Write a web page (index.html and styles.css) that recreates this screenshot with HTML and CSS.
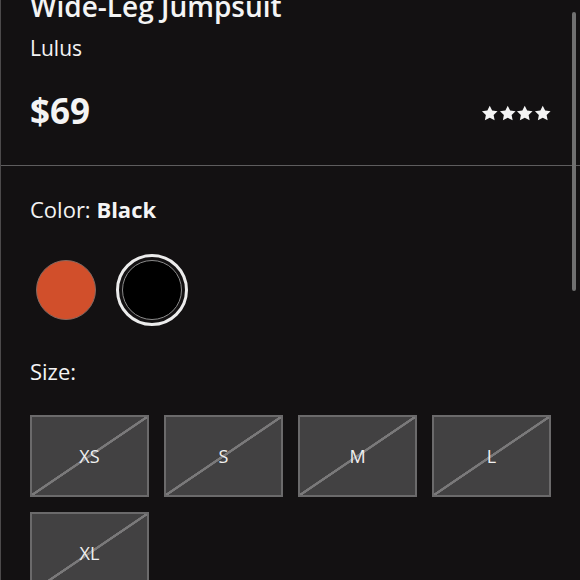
FILE: index.html
```html
<!DOCTYPE html>
<html lang="en">
<head>
	<meta charset="UTF-8">
	<title>Wide-Leg Jumpsuit</title>
	<link rel="stylesheet" href="styles.css">
</head>
<body>
	<div class="page">
		<div class="head">
			<h1 class="title">Wide-Leg Jumpsuit</h1>
			<div class="brand">Lulus</div>
			<div class="price-row">
				<div class="price">$69</div>
				<div class="stars">
					<svg viewBox="0 0 24 24"><path d="M12 1l3.3 6.6 7.4 1-5.4 5.1 1.4 7.3L12 17.5l-6.7 3.5 1.4-7.3-5.4-5.1 7.4-1z"/></svg>
					<svg viewBox="0 0 24 24"><path d="M12 1l3.3 6.6 7.4 1-5.4 5.1 1.4 7.3L12 17.5l-6.7 3.5 1.4-7.3-5.4-5.1 7.4-1z"/></svg>
					<svg viewBox="0 0 24 24"><path d="M12 1l3.3 6.6 7.4 1-5.4 5.1 1.4 7.3L12 17.5l-6.7 3.5 1.4-7.3-5.4-5.1 7.4-1z"/></svg>
					<svg viewBox="0 0 24 24"><path d="M12 1l3.3 6.6 7.4 1-5.4 5.1 1.4 7.3L12 17.5l-6.7 3.5 1.4-7.3-5.4-5.1 7.4-1z"/></svg>
				</div>
			</div>
		</div>
		<div class="options">
			<div class="label color-label">Color: <b>Black</b></div>
			<div class="swatches">
				<a href="javascript:;" class="swatch orange"></a>
				<a href="javascript:;" class="swatch black selected"><span></span></a>
			</div>
			<div class="label size-label">Size:</div>
			<div class="sizes">
				<a href="javascript:;" class="size">XS</a>
				<a href="javascript:;" class="size">S</a>
				<a href="javascript:;" class="size">M</a>
				<a href="javascript:;" class="size">L</a>
				<a href="javascript:;" class="size">XL</a>
			</div>
		</div>
	</div>
	<div class="scrollbar"></div>
</body>
</html>
```

FILE: styles.css
```css
*{
	margin: 0;
	padding: 0;
	box-sizing: border-box;
}
html,body{
	height: 100%;
	overflow: hidden;
}
body{
	background-color: #131112;
	color: #f4f4f4;
	font-family: "Open Sans", "Liberation Sans", sans-serif;
}
.page{
	min-height: 100%;
	border-left: 1px solid #4c4a4b;
}
.head{
	display: flow-root;
	padding: 0 30px 0 29px;
	height: 166px;
	border-bottom: 1px solid #5e5d5e;
}
.title{
	font-size: 28px;
	font-weight: 600;
	line-height: 28px;
	margin-top: -8px;
}
.brand{
	font-size: 21px;
	line-height: 26px;
	margin-top: 15px;
}
.price-row{
	display: flex;
	align-items: center;
	justify-content: space-between;
	margin-top: 30px;
}
.price{
	font-size: 35px;
	font-weight: 700;
	line-height: 40px;
}
.stars{
	display: flex;
	margin-top: 6px;
	margin-right: -1px;
}
.stars svg{
	width: 17.5px;
	height: 17.5px;
	fill: #f4f4f4;
}
.options{
	padding: 0 30px 0 29px;
}
.label{
	font-size: 22px;
	font-weight: 500;
	line-height: 26px;
}
.label b{
	font-weight: 700;
}
.color-label{
	margin-top: 30px;
}
.swatches{
	display: flex;
	align-items: center;
	gap: 20px;
	margin: 32px 0 0 6px;
	height: 72px;
}
.swatch{
	display: block;
	border-radius: 50%;
}
.orange{
	width: 60px;
	height: 60px;
	background-color: #d14f2b;
	border: 1.5px solid #86685f;
}
.black{
	width: 72px;
	height: 72px;
	border: 3px solid #ececec;
	padding: 3px;
}
.black span{
	display: block;
	width: 100%;
	height: 100%;
	border-radius: 50%;
	background-color: #000;
	border: 1.5px solid #8a8a8a;
}
.size-label{
	margin-top: 32px;
}
.sizes{
	display: grid;
	grid-template-columns: repeat(4, 119px);
	grid-auto-rows: 82px;
	gap: 15px;
	margin-top: 31px;
}
.size{
	display: flex;
	align-items: center;
	justify-content: center;
	color: #f0f0f0;
	text-decoration: none;
	font-size: 18px;
	background-color: #424142;
	background-image: linear-gradient(to bottom right, transparent calc(50% - 1.5px), #7a797a calc(50% - 1px), #7a797a calc(50% + 1px), transparent calc(50% + 1.5px));
	border: 2px solid #6b6a6b;
}
.scrollbar{
	position: fixed;
	top: 12px;
	right: 4px;
	width: 4px;
	height: 279px;
	border-radius: 2px;
	background-color: #707070;
}
```
